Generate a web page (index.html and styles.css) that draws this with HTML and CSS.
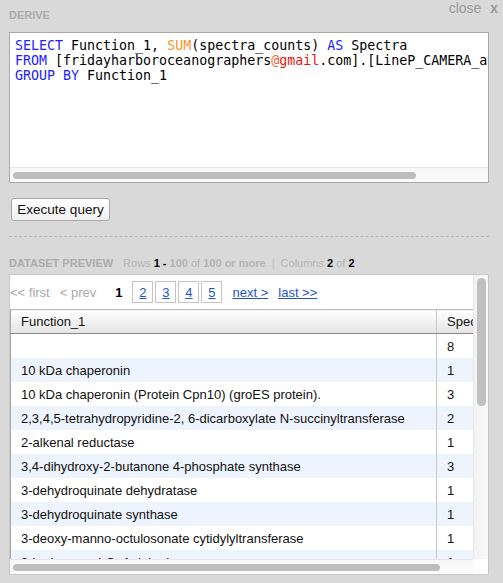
FILE: index.html
```html
<!DOCTYPE html>
<html>
<head>
<meta charset="utf-8">
<link rel="stylesheet" href="styles.css">
</head>
<body>
<div class="panel">
  <div class="topbar">
    <div class="label derive">DERIVE</div>
    <div class="close">close <b>x</b></div>
  </div>
  <div class="editor">
    <div class="code">
      <div><span class="kw">SELECT</span> Function_1, <span class="fn">SUM</span>(spectra_counts) <span class="kw">AS</span> Spectra</div>
      <div><span class="kw">FROM</span> [fridayharboroceanographers<span class="at">@</span><span class="red">gmail</span>.com].[LineP_CAMERA_annotations]</div>
      <div><span class="kw">GROUP</span> <span class="kw">BY</span> Function_1</div>
    </div>
    <div class="hscroll"><div class="thumb ed-thumb"></div></div>
  </div>
  <button class="btn">Execute query</button>
  <div class="divider"></div>
  <div class="info">
    <span class="label">DATASET PREVIEW</span>
    <span class="meta">Rows <b class="dark">1 -</b> <b>100</b> of <b>100 or more</b> <span class="sep">|</span> Columns <b class="dark">2</b> of <b class="dark">2</b></span>
  </div>
  <div class="preview">
    <div class="main">
      <div class="pager">
        <span class="off">&lt;&lt; first</span>
        <span class="off">&lt; prev</span>
        <span class="cur">1</span>
        <span class="pages">
          <a class="pg">2</a><a class="pg">3</a><a class="pg">4</a><a class="pg">5</a>
        </span>
        <a class="lnk">next &gt;</a>
        <a class="lnk">last &gt;&gt;</a>
      </div>
      <div class="tablewrap">
        <table class="grid">
          <colgroup><col class="w1"><col class="w2"></colgroup>
          <thead>
            <tr><th class="c1">Function_1</th><th class="c2">Spectra</th></tr>
          </thead>
          <tbody>
            <tr><td class="c1"></td><td class="c2">8</td></tr>
            <tr class="alt"><td class="c1">10 kDa chaperonin</td><td class="c2">1</td></tr>
            <tr><td class="c1">10 kDa chaperonin (Protein Cpn10) (groES protein).</td><td class="c2">3</td></tr>
            <tr class="alt"><td class="c1">2,3,4,5-tetrahydropyridine-2, 6-dicarboxylate N-succinyltransferase</td><td class="c2">2</td></tr>
            <tr><td class="c1">2-alkenal reductase</td><td class="c2">1</td></tr>
            <tr class="alt"><td class="c1">3,4-dihydroxy-2-butanone 4-phosphate synthase</td><td class="c2">3</td></tr>
            <tr><td class="c1">3-dehydroquinate dehydratase</td><td class="c2">1</td></tr>
            <tr class="alt"><td class="c1">3-dehydroquinate synthase</td><td class="c2">1</td></tr>
            <tr><td class="c1">3-deoxy-manno-octulosonate cytidylyltransferase</td><td class="c2">1</td></tr>
            <tr class="alt"><td class="c1">3-hydroxyacyl-CoA dehydrogenase</td><td class="c2">1</td></tr>
          </tbody>
        </table>
      </div>
      <div class="hscroll pv-h"><div class="thumb pv-thumb"></div></div>
    </div>
    <div class="vscroll">
      <div class="vthumb"></div>
      <div class="corner"></div>
    </div>
  </div>
</div>
</body>
</html>
```

FILE: styles.css
```css
html, body {
  margin: 0;
  padding: 0;
  background: #d9d9d9;
  font-family: "Liberation Sans", Arial, sans-serif;
  overflow: hidden;
}
.panel {
  width: 480px;
  padding: 0 0 0 9px;
}
.topbar {
  display: flex;
  justify-content: space-between;
  align-items: flex-start;
  height: 32px;
  width: 490px;
}
.label {
  font-size: 11px;
  font-weight: bold;
  color: #ababab;
  line-height: 13px;
}
.derive {
  margin-top: 9px;
}
.close {
  font-size: 14px;
  color: #999;
  line-height: 16px;
  margin-right: 1px;
}
.close b {
  margin-left: 5px;
  color: #9a9a9a;
}
.editor {
  width: 478px;
  height: 149px;
  background: #fff;
  border: 1px solid #aaa;
  display: flex;
  flex-direction: column;
  overflow: hidden;
}
.code {
  flex: 1;
  padding: 5px 0 0 5px;
  font-family: "DejaVu Sans Mono", "Liberation Mono", monospace;
  font-size: 13.3px;
  line-height: 15px;
  color: #000;
  white-space: nowrap;
  overflow: hidden;
}
.kw { color: #2222ff; }
.fn { color: #f6922a; }
.at { color: #f2602a; }
.red { color: #ee1111; }
.hscroll {
  height: 15px;
  flex: none;
  background: linear-gradient(#f7f7f7, #fbfbfb);
  border-top: 1px solid #e6e6e6;
  box-sizing: border-box;
  padding: 4px 0 0 3px;
}
.thumb {
  height: 7px;
  border-radius: 4px;
  background: #bdbdbd;
}
.ed-thumb { width: 403px; }
.btn {
  display: block;
  margin: 15px 0 0 2px;
  width: 99px;
  height: 23px;
  border: 1px solid #a8a8a8;
  border-radius: 3px;
  background: linear-gradient(#ffffff, #f0f0f0);
  font-family: "Liberation Sans", Arial, sans-serif;
  font-size: 13.5px;
  color: #111;
  padding: 0;
}
.divider {
  margin-top: 15px;
  width: 480px;
  border-top: 1px dashed #b8b8b8;
}
.info {
  margin-top: 20px;
  height: 17px;
  display: flex;
  align-items: flex-start;
  gap: 10px;
  white-space: nowrap;
}
.meta {
  font-size: 11px;
  color: #b4b4b4;
  line-height: 13px;
}
.meta b { font-weight: bold; }
.meta .dark { color: #000; }
.sep { margin: 0 3px; color: #c0c0c0; }
.preview {
  width: 478px;
  height: 299px;
  background: #fff;
  border: 1px solid #c8c8c8;
  display: flex;
}
.main {
  width: 463px;
  display: flex;
  flex-direction: column;
  overflow: hidden;
}
.pager {
  height: 34px;
  flex: none;
  display: flex;
  align-items: center;
  font-size: 13px;
  white-space: nowrap;
}
.off {
  color: #a9a9a9;
  margin-right: 10px;
}
.cur {
  font-weight: bold;
  color: #000;
  margin-left: 9px;
  margin-right: 10px;
}
.pages {
  display: flex;
  gap: 2px;
  margin-right: 10px;
}
.pg {
  width: 19px;
  height: 20px;
  border: 1px solid #c4c4c4;
  display: flex;
  align-items: center;
  justify-content: center;
  color: #2255cc;
  text-decoration: underline;
}
.lnk {
  color: #2255cc;
  text-decoration: underline;
  margin-right: 10px;
}
.tablewrap {
  flex: 1;
  overflow: hidden;
}
.grid {
  table-layout: fixed;
  width: 520px;
  border-collapse: collapse;
  font-size: 13px;
  color: #111;
  white-space: nowrap;
  border-left: 1px solid #a8a8a8;
}
.w1 { width: 426px; }
.w2 { width: 94px; }
.grid th {
  height: 23px;
  font-weight: normal;
  text-align: left;
  background: linear-gradient(#ffffff, #e4e4e4);
  border-top: 1px solid #bcbcbc;
  border-bottom: 1px solid #8a8a8a;
  padding: 0 0 0 10px;
}
.grid td {
  height: 24px;
  padding: 0 0 0 10px;
}
.grid .c1 {
  border-right: 1px solid #c8c8c8;
  overflow: hidden;
}
.grid tr.alt td {
  background: #edf4fd;
}
.pv-h {
  padding-left: 3px;
}
.pv-thumb { width: 427px; }
.vscroll {
  width: 15px;
  background: linear-gradient(90deg, #f2f2f2, #fafafa);
  border-left: 1px solid #e8e8e8;
  box-sizing: border-box;
  display: flex;
  flex-direction: column;
  padding: 3px 0 0 3px;
}
.vthumb {
  width: 9px;
  height: 128px;
  border-radius: 5px;
  background: #c0c0c0;
}
.corner {
  margin-top: auto;
  margin-left: -4px;
  width: 15px;
  height: 15px;
  background: #fff;
}
```
